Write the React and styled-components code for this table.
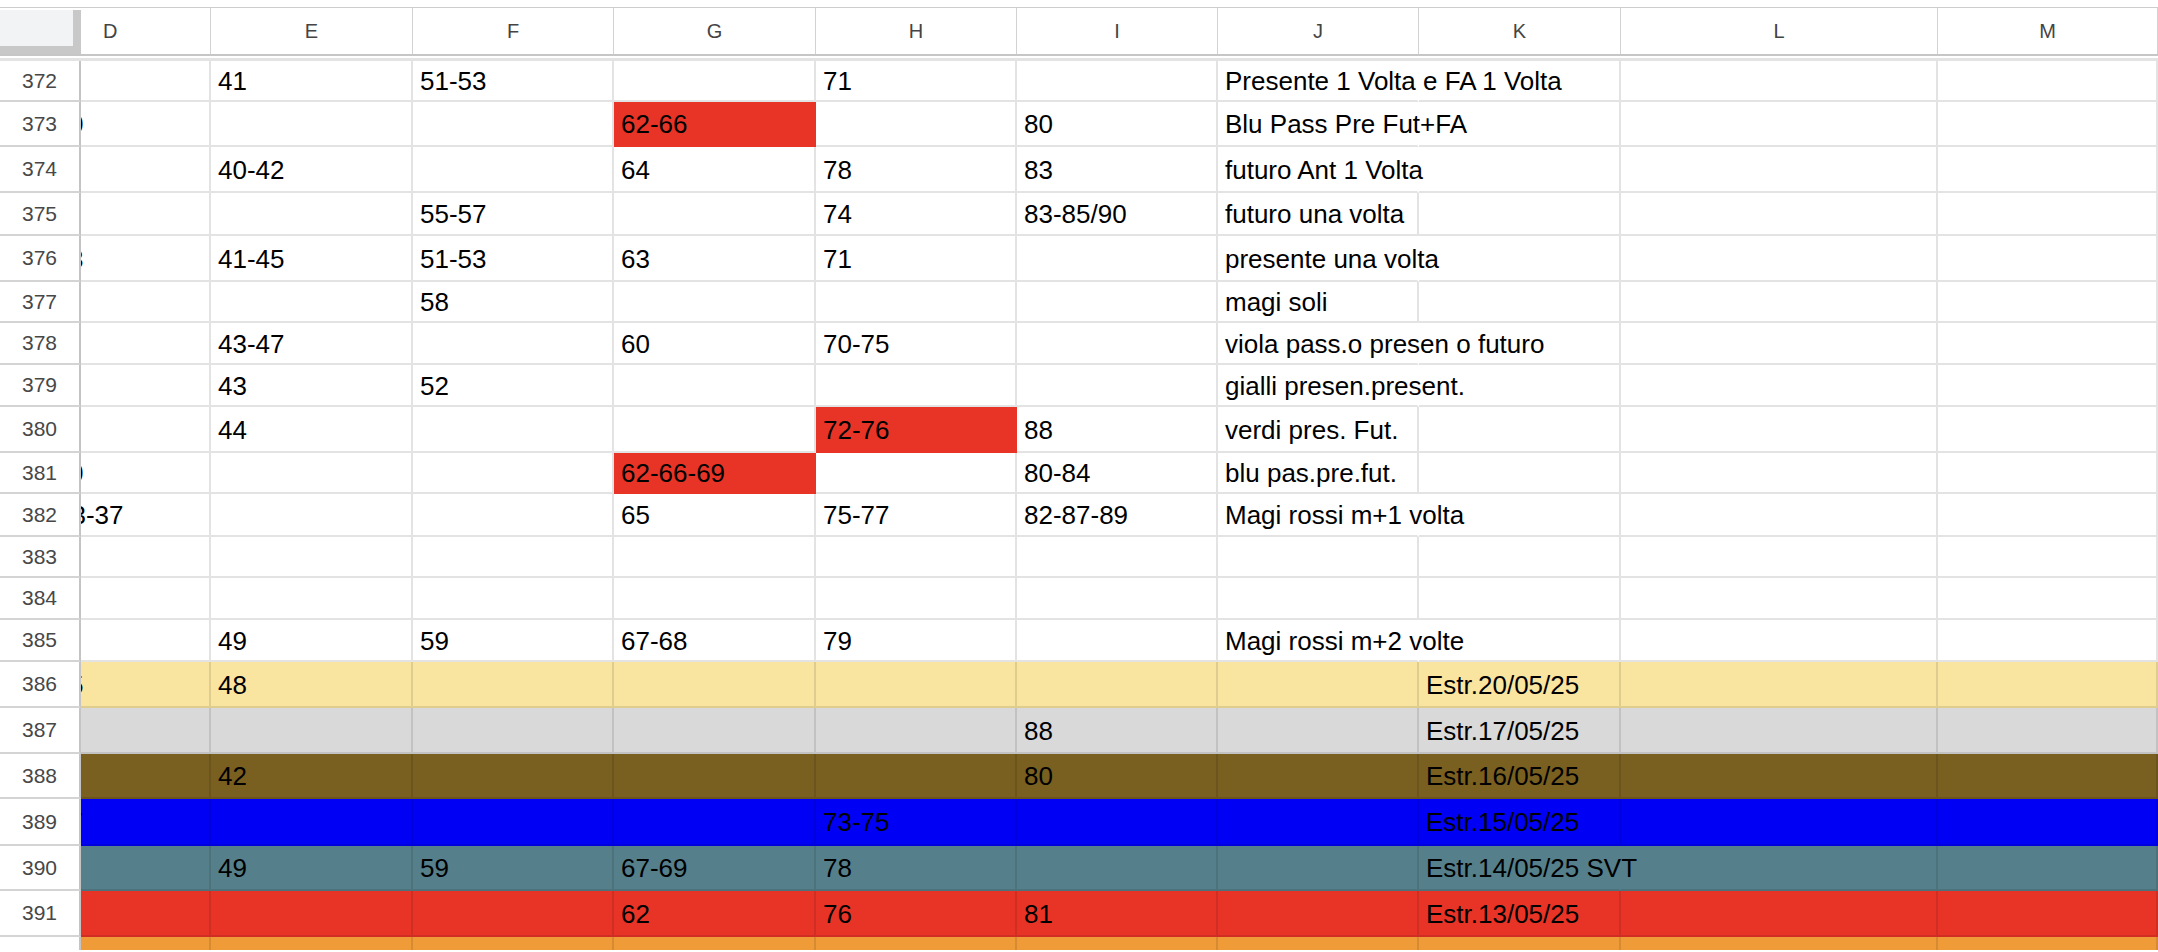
import React from 'react'
import styled, { createGlobalStyle } from 'styled-components'

const GlobalStyle = createGlobalStyle`
  html, body {
    margin: 0;
    padding: 0;
    background: #fff;
  }
  body {
    font-family: "Liberation Sans", Arial, sans-serif;
    overflow: hidden;
  }
`

const COLS = '81px 130px 202px 201px 202px 201px 201px 201px 202px 317px 220px'
const LETTERS = ['D', 'E', 'F', 'G', 'H', 'I', 'J', 'K', 'L', 'M']

const RED = '#e83426'
const WHITE_LINE = '#e3e3e3'
const TINT_LINE = 'rgba(0, 0, 0, 0.1)'

const Sheet = styled.div`
  width: 2158px;
  height: 950px;
  padding-top: 7px;
  box-sizing: border-box;
  overflow: hidden;
  background: #fff;
`

const HeaderRow = styled.div`
  display: grid;
  grid-template-columns: ${COLS};
  height: 49px;
  box-sizing: border-box;
  border-top: 1px solid #cdcdcd;
  border-bottom: 2px solid #c6c6c6;
`

const Corner = styled.div`
  box-sizing: border-box;
  background: #f2f3f4;
  border-right: 8px solid #c8c8c8;
  border-bottom: 8px solid #c8c8c8;
  margin-top: 2px;
`

const ColHead = styled.div`
  display: flex;
  align-items: center;
  justify-content: ${p => (p.$lead ? 'flex-start' : 'center')};
  padding-left: ${p => (p.$lead ? '22px' : '0')};
  border-right: 1px solid #d2d2d2;
  font-size: 20px;
  color: #444;
`

const FreezeLine = styled.div`
  height: 3px;
  margin-top: 2px;
  background: #e3e3e3;
`

const Row = styled.div`
  display: grid;
  grid-template-columns: ${COLS};
  height: ${p => p.$h}px;
  background: ${p => p.$fill || '#fff'};
`

const RowNum = styled.div`
  box-sizing: border-box;
  display: flex;
  align-items: center;
  justify-content: center;
  background: #fff;
  border-right: 2px solid #c4c4c4;
  border-bottom: 2px solid #d4d4d4;
  font-size: 21px;
  color: #474747;
`

const Cell = styled.div`
  box-sizing: border-box;
  display: flex;
  align-items: center;
  padding: 2px 0 0 7px;
  min-width: 0;
  background: ${p => p.$fill || 'transparent'};
  border-right: 2px solid ${p => (p.$spill ? 'transparent' : p.$line)};
  border-bottom: 2px solid ${p => p.$line};
  overflow: ${p => (p.$clip ? 'hidden' : 'visible')};
  white-space: nowrap;
  font-size: 26px;
  color: #000;
`

// text of column D whose start is scrolled out of view
const Clipped = styled.span`
  flex: none;
  margin-left: ${p => p.$shift}px;
`

const rows = [
  { n: 372, h: 41, c: { E: '41', F: '51-53', H: '71', J: 'Presente 1 Volta e FA 1 Volta' }, spill: 'J' },
  { n: 373, h: 45, c: { G: '62-66', I: '80', J: 'Blu Pass Pre Fut+FA' }, red: ['G'], d: { t: '0', s: -19 }, spill: 'J' },
  { n: 374, h: 46, c: { E: '40-42', G: '64', H: '78', I: '83', J: 'futuro Ant 1 Volta' }, spill: 'J' },
  { n: 375, h: 43, c: { F: '55-57', H: '74', I: '83-85/90', J: 'futuro una volta' } },
  { n: 376, h: 46, c: { E: '41-45', F: '51-53', G: '63', H: '71', J: 'presente una volta' }, d: { t: '3', s: -19 }, spill: 'J' },
  { n: 377, h: 41, c: { F: '58', J: 'magi soli' } },
  { n: 378, h: 42, c: { E: '43-47', G: '60', H: '70-75', J: 'viola pass.o presen o futuro' }, spill: 'J' },
  { n: 379, h: 42, c: { E: '43', F: '52', J: 'gialli  presen.present.' }, spill: 'J' },
  { n: 380, h: 46, c: { E: '44', H: '72-76', I: '88', J: 'verdi pres. Fut.' }, red: ['H'] },
  { n: 381, h: 41, c: { G: '62-66-69', I: '80-84', J: 'blu pas.pre.fut.' }, red: ['G'], d: { t: '0', s: -19 } },
  { n: 382, h: 43, c: { G: '65', H: '75-77', I: '82-87-89', J: 'Magi rossi m+1 volta' }, d: { t: '33-37', s: -31 }, spill: 'J' },
  { n: 383, h: 41, c: {} },
  { n: 384, h: 42, c: {} },
  { n: 385, h: 42, c: { E: '49', F: '59', G: '67-68', H: '79', J: 'Magi rossi m+2 volte' }, spill: 'J' },
  { n: 386, h: 46, fill: '#f9e4a0', c: { E: '48', K: 'Estr.20/05/25' }, d: { t: '5', s: -19 } },
  { n: 387, h: 46, fill: '#d9d9d9', c: { I: '88', K: 'Estr.17/05/25' } },
  { n: 388, h: 45, fill: '#795f20', c: { E: '42', I: '80', K: 'Estr.16/05/25' } },
  { n: 389, h: 47, fill: '#0000f5', c: { H: '73-75', K: 'Estr.15/05/25' }, d: { t: '7', s: -19 } },
  { n: 390, h: 45, fill: '#557f8a', c: { E: '49', F: '59', G: '67-69', H: '78', K: 'Estr.14/05/25 SVT' }, spill: 'K' },
  { n: 391, h: 46, fill: RED, c: { G: '62', H: '76', I: '81', K: 'Estr.13/05/25' } },
  { n: 392, h: 46, fill: '#ef9b38', c: { E: '46', F: '55', K: 'Estr.12/05/25' } },
]

const SheetRow = ({ row }) => {
  const line = row.fill ? TINT_LINE : WHITE_LINE
  return (
    <Row $h={row.h} $fill={row.fill}>
      <RowNum>{row.n}</RowNum>
      {LETTERS.map(l => {
        const red = row.red && row.red.includes(l)
        if (l === 'D') {
          return (
            <Cell key={l} $line={line} $clip>
              {row.d && <Clipped $shift={row.d.s}>{row.d.t}</Clipped>}
            </Cell>
          )
        }
        return (
          <Cell
            key={l}
            $line={red ? RED : line}
            $fill={red ? RED : null}
            $spill={row.spill === l}
          >
            {row.c[l]}
          </Cell>
        )
      })}
    </Row>
  )
}

const App = () => {
  return (
    <>
      <GlobalStyle />
      <Sheet>
        <HeaderRow>
          <Corner />
          {LETTERS.map(l => (
            <ColHead key={l} $lead={l === 'D'}>{l}</ColHead>
          ))}
        </HeaderRow>
        <FreezeLine />
        {rows.map(r => (
          <SheetRow key={r.n} row={r} />
        ))}
      </Sheet>
    </>
  )
}

export default App
